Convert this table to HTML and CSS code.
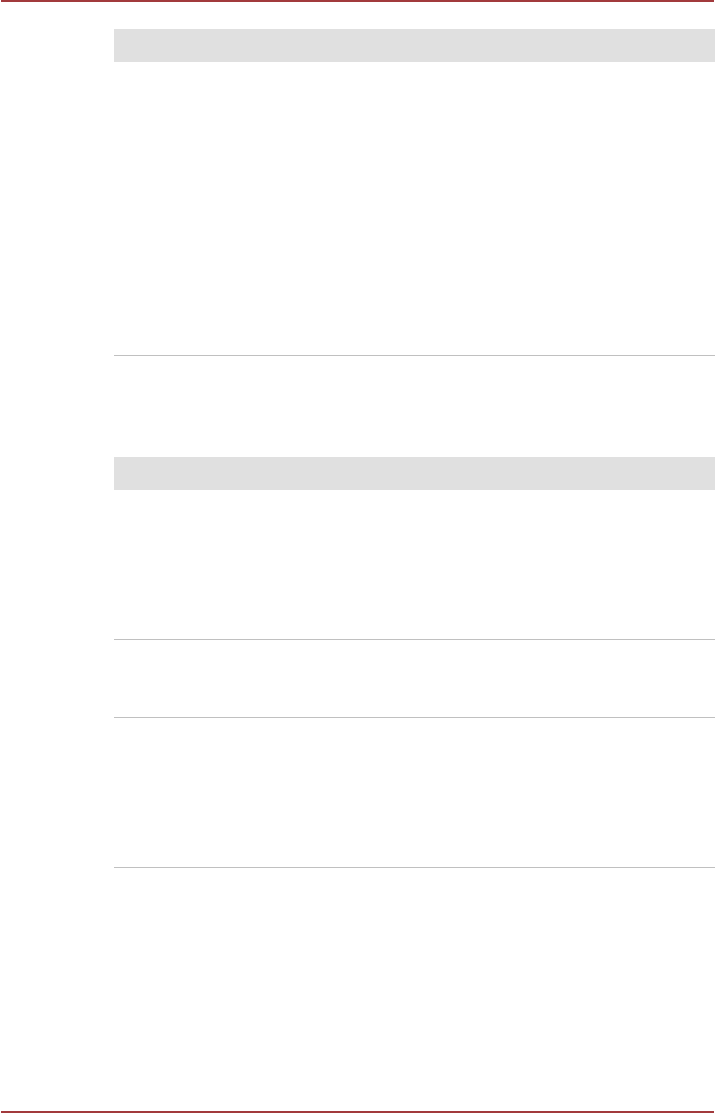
FILE: index.html
```html
<!DOCTYPE html>
<html lang="en">
<head>
<meta charset="utf-8">
<title>Document page</title>
<link rel="stylesheet" href="styles.css">
</head>
<body>
<div class="page">
  <div class="rule rule-top"></div>
  <main class="content">
    <section class="table table-first">
      <div class="table-head"></div>
      <div class="table-row row-tall-1"></div>
    </section>
    <section class="table table-second">
      <div class="table-head"></div>
      <div class="table-row row-mid"></div>
      <div class="table-row row-short"></div>
      <div class="table-row row-mid"></div>
    </section>
  </main>
  <div class="rule rule-bottom"></div>
</div>
</body>
</html>
```
FILE: styles.css
```css
html, body {
  margin: 0;
  padding: 0;
  background: #ffffff;
  font-family: "Liberation Sans", Arial, sans-serif;
}
.page {
  display: flex;
  flex-direction: column;
  min-height: 1113px;
}
.rule {
  height: 2px;
  background: #a23a3c;
  margin-left: 1px;
  margin-right: 1px;
}
.content {
  display: flex;
  flex-direction: column;
  padding-left: 114px;
  padding-top: 27px;
}
.table {
  display: flex;
  flex-direction: column;
}
.table-second {
  margin-top: 101px;
}
.table-head {
  height: 33px;
  background: #e0e0e0;
}
.table-row {
  border-bottom: 1px solid #c0c0c0;
}
.row-tall-1 { height: 293px; }
.row-mid { height: 149px; }
.row-short { height: 77px; }
.rule-bottom {
  margin-top: auto;
}
```
